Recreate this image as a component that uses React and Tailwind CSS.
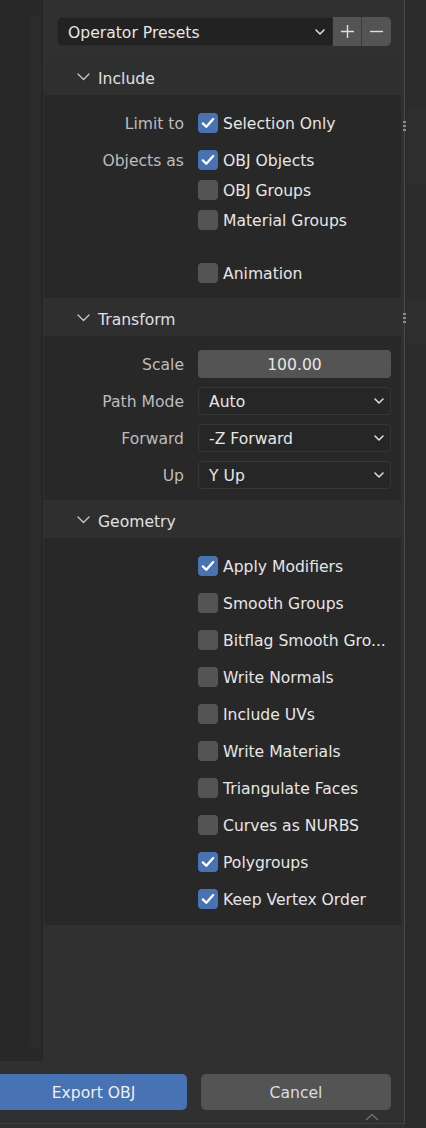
import React from "react";

const FONT = { fontFamily: '"DejaVu Sans", "Liberation Sans", sans-serif' };

function Check({ on }) {
  return (
    <div
      className={`w-5 h-5 shrink-0 rounded-[4px] flex items-center justify-center ${
        on ? "bg-[#4772b3]" : "bg-[#545454]"
      }`}
    >
      {on && (
        <svg width="14" height="12" viewBox="0 0 14 12">
          <path d="M1.8 6.4 L5.3 9.8 L12.2 2" fill="none" stroke="#ffffff" strokeWidth="2.3" strokeLinecap="round" strokeLinejoin="round" />
        </svg>
      )}
    </div>
  );
}

function DownChevron() {
  return (
    <svg width="10" height="6" viewBox="0 0 10 6">
      <path d="M1 1 L5 5 L9 1" fill="none" stroke="#dcdcdc" strokeWidth="1.6" strokeLinecap="round" strokeLinejoin="round" />
    </svg>
  );
}

function Row({ label, children, className = "" }) {
  return (
    <div className={`flex items-center h-[28px] ${className}`}>
      <div className="w-[140px] pt-[4px] text-right text-[#bdbdbd] whitespace-nowrap">{label}</div>
      <div className="ml-[14px] flex items-center">{children}</div>
    </div>
  );
}

function CheckRow({ label, text, on, className }) {
  return (
    <Row label={label} className={className}>
      <Check on={on} />
      <span className="ml-[5px] pt-[4px] text-[#e6e6e6] whitespace-nowrap">{text}</span>
    </Row>
  );
}

function Select({ value }) {
  return (
    <div className="w-[193px] h-[28px] rounded-[4px] bg-[#262626] border border-[#363636] flex items-center justify-between pl-[10px] pr-[6px] text-[#e6e6e6]">
      <span className="pt-[4px]">{value}</span>
      <DownChevron />
    </div>
  );
}

function Section({ title, children, className = "" }) {
  return (
    <div className={`ml-[1px] mr-[3px] ${className}`}>
      <div className="h-[36px] bg-[#2f2f2f] flex items-center pl-[33px] text-[#e0e0e0]">
        <svg width="13" height="8" viewBox="0 0 13 8">
          <path d="M1 1 L6.5 6.5 L12 1" fill="none" stroke="#c8c8c8" strokeWidth="1.3" strokeLinecap="round" strokeLinejoin="round" />
        </svg>
        <span className="ml-[8px] pt-[5px]">{title}</span>
      </div>
      <div className="bg-[#282828]">{children}</div>
    </div>
  );
}

export default function App() {
  const geometry = [
    ["Apply Modifiers", true],
    ["Smooth Groups", false],
    ["Bitflag Smooth Gro...", false],
    ["Write Normals", false],
    ["Include UVs", false],
    ["Write Materials", false],
    ["Triangulate Faces", false],
    ["Curves as NURBS", false],
    ["Polygroups", true],
    ["Keep Vertex Order", true],
  ];

  return (
    <div
      className="w-[426px] h-[1128px] bg-[#303030] flex overflow-hidden relative text-[15.6px] leading-none"
      style={FONT}
    >
      {/* main region */}
      <div className="w-[404px] flex flex-col">
        <div className="flex h-[1061px]">
          {/* file browser edge */}
          <div className="w-[43px] h-[1061px] bg-[#282828] border-r border-[#242424] pt-[15px] pl-[30px]">
            <div className="w-[11px] h-[1033px] bg-[#2b2b2b] rounded-b-[5px]" />
          </div>

          {/* sidebar */}
          <div className="flex-1 flex flex-col">
            <div className="flex pt-[17px] pl-[14px] pr-[13px]">
              <div className="flex-1 h-[29px] bg-[#222222] border border-[#2a2a2a] rounded-l-[5px] flex items-center justify-between pl-[10px] pr-[7px] text-[#e6e6e6]">
                <span className="pt-[4px]">Operator Presets</span>
                <DownChevron />
              </div>
              <div className="w-[29px] h-[29px] bg-[#545454] flex items-center justify-center border-r border-[#3a3a3a]">
                <svg width="15" height="15" viewBox="0 0 15 15">
                  <path d="M7.5 1 V14 M1 7.5 H14" stroke="#dedede" strokeWidth="1.4" />
                </svg>
              </div>
              <div className="w-[29px] h-[29px] bg-[#545454] rounded-r-[5px] flex items-center justify-center">
                <svg width="15" height="15" viewBox="0 0 15 15">
                  <path d="M1 7.5 H14" stroke="#dedede" strokeWidth="1.4" />
                </svg>
              </div>
            </div>

            <Section title="Include" className="mt-[13px]">
              <div className="pt-[14px] pb-[11px]">
                <CheckRow label="Limit to" text="Selection Only" on />
                <CheckRow label="Objects as" text="OBJ Objects" on className="mt-[9px]" />
                <CheckRow text="OBJ Groups" className="mt-[2px]" />
                <CheckRow text="Material Groups" className="mt-[2px]" />
                <CheckRow text="Animation" className="mt-[25px]" />
              </div>
            </Section>

            <Section title="Transform" className="mt-[2px]">
              <div className="pt-[14px] pb-[11px] flex flex-col gap-[9px]">
                <Row label="Scale">
                  <div className="w-[193px] h-[28px] rounded-[4px] bg-[#545454] flex items-center justify-center text-[#e6e6e6]">
                    <span className="pt-[4px]">100.00</span>
                  </div>
                </Row>
                <Row label="Path Mode">
                  <Select value="Auto" />
                </Row>
                <Row label="Forward">
                  <Select value="-Z Forward" />
                </Row>
                <Row label="Up">
                  <Select value="Y Up" />
                </Row>
              </div>
            </Section>

            <Section title="Geometry" className="mt-[2px]">
              <div className="pt-[14px] pb-[12px] flex flex-col gap-[9px]">
                {geometry.map(([text, on]) => (
                  <CheckRow key={text} text={text} on={on} />
                ))}
              </div>
            </Section>
          </div>
        </div>

        {/* action buttons */}
        <div className="flex mt-[13px] pr-[13px]">
          <div className="w-[187px] h-[36px] bg-[#4772b3] rounded-r-[5px] flex items-center justify-center text-[#f0f0f0]">
            <span className="pt-[4px]">Export OBJ</span>
          </div>
          <div className="ml-[14px] flex-1 h-[36px] bg-[#545454] rounded-[5px] flex items-center justify-center text-[#dcdcdc]">
            <span className="pt-[4px]">Cancel</span>
          </div>
        </div>
        <div className="h-[14px] flex justify-end pr-[25px] items-end pb-[2px] border-b border-[#3f3f3f]">
          <svg width="14" height="8" viewBox="0 0 14 8">
            <path d="M1 7 L7 1.5 L13 7" fill="none" stroke="#6c6c6c" strokeWidth="1.5" />
          </svg>
        </div>
      </div>

      {/* divider and right strip */}
      <div className="w-px h-[1124px] bg-[#4a4a4a]" />
      <div className="flex-1 bg-[#2b2b2b] flex flex-col pl-[1px]">
        <div className="mt-[108px] h-[77px] bg-[#2e2e2e] rounded-l-[4px]" />
        <div className="mt-[115px] h-[45px] bg-[#2e2e2e] rounded-l-[4px]" />
      </div>

      {/* region resize grips */}
      <div className="absolute left-[403px] top-[121px] flex flex-col gap-[2px]">
        <div className="w-[3px] h-[2px] bg-[#8a8a8a]" />
        <div className="w-[3px] h-[2px] bg-[#8a8a8a]" />
        <div className="w-[3px] h-[2px] bg-[#8a8a8a]" />
      </div>
      <div className="absolute left-[403px] top-[313px] flex flex-col gap-[2px]">
        <div className="w-[3px] h-[2px] bg-[#8a8a8a]" />
        <div className="w-[3px] h-[2px] bg-[#8a8a8a]" />
        <div className="w-[3px] h-[2px] bg-[#8a8a8a]" />
      </div>
    </div>
  );
}
